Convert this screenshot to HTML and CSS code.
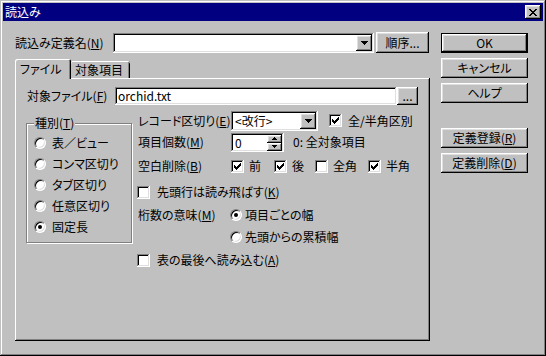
FILE: index.html
```html
<!DOCTYPE html>
<html lang="ja">
<head>
<meta charset="utf-8">
<title>読込み</title>
<link rel="stylesheet" href="styles.css">
</head>
<body>
<div class="window">
  <div class="titlebar">
    <span class="title">読込み</span>
    <div class="btn close"><svg width="8" height="7" viewBox="0 0 8 7" shape-rendering="crispEdges"><path d="M0 0h2v1h-2z M6 0h2v1h-2z M1 1h2v1h-2z M5 1h2v1h-2z M2 2h4v1h-4z M3 3h2v1h-2z M2 4h4v1h-4z M1 5h2v1h-2z M5 5h2v1h-2z M0 6h2v1h-2z M6 6h2v1h-2z"/></svg></div>
  </div>
  <div class="content">
    <div class="main">
      <div class="name-row">
        <span class="name-label">読込み定義名(<u>N</u>)</span>
        <div class="field combo name-combo">
          <span class="combo-text"></span>
          <div class="btn drop"><svg width="7" height="4" viewBox="0 0 7 4" shape-rendering="crispEdges"><path d="M0 0h7v1h-7z M1 1h5v1h-5z M2 2h3v1h-3z M3 3h1v1h-1z"/></svg></div>
        </div>
        <div class="btn order-btn"><span>順序...</span></div>
      </div>
      <div class="tabs">
        <div class="tab active"><span>ファイル</span></div>
        <div class="tab inactive"><span>対象項目</span></div>
      </div>
      <div class="panel">
        <div class="file-row">
          <span class="file-label">対象ファイル(<u>F</u>)</span>
          <div class="field file-input">orchid.txt</div>
          <div class="btn browse"><span>...</span></div>
        </div>
        <div class="cols">
          <div class="group">
            <div class="legend">種別(<u>T</u>)</div>
            <div class="radios">
              <div class="opt"><span class="radio"></span><span>表／ビュー</span></div>
              <div class="opt"><span class="radio"></span><span>コンマ区切り</span></div>
              <div class="opt"><span class="radio"></span><span>タブ区切り</span></div>
              <div class="opt"><span class="radio"></span><span>任意区切り</span></div>
              <div class="opt"><span class="radio on"></span><span>固定長</span></div>
            </div>
          </div>
          <div class="options">
            <div class="orow r1">
              <span class="olabel">レコード区切り(<u>E</u>)</span>
              <div class="field combo rec-combo">
                <span class="combo-text">&lt;改行&gt;</span>
                <div class="btn drop"><svg width="7" height="4" viewBox="0 0 7 4" shape-rendering="crispEdges"><path d="M0 0h7v1h-7z M1 1h5v1h-5z M2 2h3v1h-3z M3 3h1v1h-1z"/></svg></div>
              </div>
              <div class="ck ck-wide"><span class="cb"><svg class="tick" width="7" height="7" viewBox="0 0 7 7" shape-rendering="crispEdges"><path d="M6 0h1v1h-1z M5 1h2v1h-2z M0 2h1v1h-1z M4 2h3v1h-3z M0 3h2v1h-2z M3 3h3v1h-3z M0 4h5v1h-5z M1 5h3v1h-3z M2 6h1v1h-1z"/></svg></span><span>全/半角区別</span></div>
            </div>
            <div class="orow r2">
              <span class="olabel">項目個数(<u>M</u>)</span>
              <div class="field spin">
                <span class="spin-text">0</span>
                <div class="spin-btns">
                  <div class="btn spin-btn"><svg width="5" height="3" viewBox="0 0 5 3" shape-rendering="crispEdges"><path d="M2 0h1v1h-1z M1 1h3v1h-3z M0 2h5v1h-5z"/></svg></div>
                  <div class="btn spin-btn"><svg width="5" height="3" viewBox="0 0 5 3" shape-rendering="crispEdges"><path d="M0 0h5v1h-5z M1 1h3v1h-3z M2 2h1v1h-1z"/></svg></div>
                </div>
              </div>
              <span class="spin-note">0: 全対象項目</span>
            </div>
            <div class="orow r3">
              <span class="olabel">空白削除(<u>B</u>)</span>
              <div class="ck w-mae"><span class="cb"><svg class="tick" width="7" height="7" viewBox="0 0 7 7" shape-rendering="crispEdges"><path d="M6 0h1v1h-1z M5 1h2v1h-2z M0 2h1v1h-1z M4 2h3v1h-3z M0 3h2v1h-2z M3 3h3v1h-3z M0 4h5v1h-5z M1 5h3v1h-3z M2 6h1v1h-1z"/></svg></span><span>前</span></div>
              <div class="ck w-ato"><span class="cb"><svg class="tick" width="7" height="7" viewBox="0 0 7 7" shape-rendering="crispEdges"><path d="M6 0h1v1h-1z M5 1h2v1h-2z M0 2h1v1h-1z M4 2h3v1h-3z M0 3h2v1h-2z M3 3h3v1h-3z M0 4h5v1h-5z M1 5h3v1h-3z M2 6h1v1h-1z"/></svg></span><span>後</span></div>
              <div class="ck w-zen"><span class="cb"></span><span>全角</span></div>
              <div class="ck"><span class="cb"><svg class="tick" width="7" height="7" viewBox="0 0 7 7" shape-rendering="crispEdges"><path d="M6 0h1v1h-1z M5 1h2v1h-2z M0 2h1v1h-1z M4 2h3v1h-3z M0 3h2v1h-2z M3 3h3v1h-3z M0 4h5v1h-5z M1 5h3v1h-3z M2 6h1v1h-1z"/></svg></span><span>半角</span></div>
            </div>
            <div class="orow r4">
              <div class="ck ck-line"><span class="cb"></span><span>先頭行は読み飛ばす(<u>K</u>)</span></div>
            </div>
            <div class="orow r5">
              <span class="olabel">桁数の意味(<u>M</u>)</span>
              <div class="ro"><span class="radio on"></span><span>項目ごとの幅</span></div>
            </div>
            <div class="orow r6 indent">
              <div class="ro"><span class="radio"></span><span>先頭からの累積幅</span></div>
            </div>
            <div class="orow r7">
              <div class="ck ck-line"><span class="cb"></span><span>表の最後へ読み込む(<u>A</u>)</span></div>
            </div>
          </div>
        </div>
      </div>
    </div>
    <div class="side">
      <div class="btn sbtn default"><span>OK</span></div>
      <div class="btn sbtn"><span>キャンセル</span></div>
      <div class="btn sbtn"><span>ヘルプ</span></div>
      <div class="btn sbtn sep"><span>定義登録(<u>R</u>)</span></div>
      <div class="btn sbtn"><span>定義削除(<u>D</u>)</span></div>
    </div>
  </div>
</div>
</body>
</html>
```

FILE: styles.css
```css
* { box-sizing: border-box; }
html, body { margin: 0; padding: 0; }
body {
  font-family: "Noto Sans CJK JP", "Noto Sans", sans-serif;
  font-size: 12px;
  line-height: 16px;
  color: #000;
  background: #c0c0c0;
  text-autospace: no-autospace;
  font-feature-settings: "palt" 1;
  white-space: nowrap;
}
u { text-decoration: underline; text-underline-offset: 1px; text-decoration-thickness: 1px; }

.window {
  width: 546px;
  height: 356px;
  padding: 3px;
  background: #c0c0c0;
  box-shadow: inset -1px -1px #000, inset 1px 1px #c0c0c0, inset -2px -2px #808080, inset 2px 2px #fff;
  display: flex;
  flex-direction: column;
}

/* generic 3D pieces */
.btn {
  background: #c0c0c0;
  box-shadow: inset -1px -1px #000, inset 1px 1px #fff, inset -2px -2px #808080, inset 2px 2px #dfdfdf;
  display: flex;
  align-items: center;
  justify-content: center;
  flex: none;
}
.field {
  background: #fff;
  box-shadow: inset -1px -1px #fff, inset 1px 1px #808080, inset -2px -2px #dfdfdf, inset 2px 2px #000;
  flex: none;
}

/* title bar */
.titlebar {
  height: 18px;
  flex: none;
  background: #000080;
  display: flex;
  align-items: center;
  justify-content: space-between;
  padding: 0 2px;
}
.title { color: #fff; }
.close { width: 16px; height: 14px; }

/* body */
.content {
  display: flex;
  padding: 11px 0 0 12px;
  gap: 11px;
}
.main { width: 415px; display: flex; flex-direction: column; }

.name-row { display: flex; align-items: center; height: 21px; }
.name-label { width: 98px; }
.combo { display: flex; align-items: center; padding: 2px; }
.combo-text { flex: 1; padding-left: 2px; line-height: 16px; }
.drop { width: 16px; height: 16px; }
.name-combo { width: 261px; height: 20px; margin-right: 2px; }
.order-btn { width: 53px; height: 21px; }

/* tabs */
.tabs { display: flex; align-items: flex-end; height: 25px; }
.tab { background: #c0c0c0; display: flex; align-items: center; border-radius: 2px 2px 0 0; }
.tab.active {
  position: relative;
  z-index: 1;
  width: 56px;
  height: 20px;
  margin-bottom: -1px;
  padding-left: 5px;
  box-shadow: inset 1px 1px #fff, inset -1px 0 #000, inset -2px 0 #808080;
}
.tab.inactive {
  width: 59px;
  height: 17px;
  padding-left: 4px;
  box-shadow: inset 0 1px #fff, inset -1px 0 #000, inset -2px 0 #808080;
}

.panel {
  height: 263px;
  padding: 9px 0 0 12px;
  box-shadow: inset -1px -1px #000, inset 1px 1px #fff, inset -2px -2px #808080;
}

.file-row { display: flex; align-items: center; height: 18px; }
.file-label { width: 88px; }
.file-input { width: 282px; height: 18px; padding: 1px 3px; line-height: 16px; }
.browse { width: 21px; height: 18px; line-height: 10px; align-items: flex-end; padding-bottom: 4px; }

.cols { display: flex; align-items: flex-start; margin-top: 5px; }

/* group box */
.group {
  margin: 13px 0 0 -1px;
  width: 106px;
  height: 120px;
  border: 1px solid #808080;
  box-shadow: inset 1px 1px #fff, 1px 1px #fff;
  padding: 0 0 0 7px;
}
.legend {
  width: fit-content;
  margin-top: -8px;
  padding: 0 1px;
  background: #c0c0c0;
  line-height: 14px;
  height: 14px;
}
.radios { margin-top: 2px; }
.opt { display: flex; align-items: center; gap: 6px; height: 21px; }

.radio {
  width: 12px;
  height: 12px;
  flex: none;
  border-radius: 50%;
  background: #fff;
  border: 1px solid;
  border-color: #808080 #fff #fff #808080;
  box-shadow: inset 1px 1px #000, inset -1px -1px #dfdfdf;
  display: flex;
  align-items: center;
  justify-content: center;
}
.radio.on::after {
  content: "";
  width: 4px;
  height: 4px;
  border-radius: 50%;
  background: #000;
}

.cb {
  width: 13px;
  height: 13px;
  flex: none;
  background: #fff;
  box-shadow: inset -1px -1px #fff, inset 1px 1px #808080, inset -2px -2px #dfdfdf, inset 2px 2px #000;
  display: flex;
  align-items: center;
  justify-content: center;
}
.tick { display: block; }

/* right option column */
.options { display: flex; flex-direction: column; margin-left: 5px; }
.orow { display: flex; align-items: center; height: 22px; }
.orow.r1 { height: 21px; }
.orow.r3 { margin-top: 2px; }
.orow.r4 { margin-top: 4px; }
.orow.r5 { margin-top: 1px; }
.orow.r7 { margin-top: 1px; }
.orow.indent { padding-left: 93px; }
.olabel { width: 94px; padding-left: 1px; }
.rec-combo { width: 87px; height: 20px; }
.ck { display: flex; align-items: center; gap: 5px; }
.ck-wide { margin-left: 11px; gap: 6px; }
.ck-line { gap: 7px; }
.w-mae { width: 43px; }
.w-ato { width: 41px; }
.w-zen { width: 53px; }
.ro { display: flex; align-items: center; gap: 3px; margin-left: -1px; }
.orow.indent .ro { margin-left: 0; }

.spin { width: 53px; height: 19px; display: flex; padding: 2px 2px 1px 2px; }
.spin-text { flex: 1; padding-left: 2px; line-height: 16px; }
.spin-btns { width: 15px; display: flex; flex-direction: column; }
.spin-btn { height: 8px; }
.spin-note { margin-left: 9px; }

/* side buttons */
.side { width: 87px; display: flex; flex-direction: column; gap: 5px; padding-top: 1px; }
.sbtn { height: 20px; }
.sbtn.sep { margin-top: 20px; }
.btn.default {
  box-shadow: inset 0 0 0 1px #000, inset -2px -2px #000, inset 2px 2px #fff, inset -3px -3px #808080, inset 3px 3px #dfdfdf;
}
```
